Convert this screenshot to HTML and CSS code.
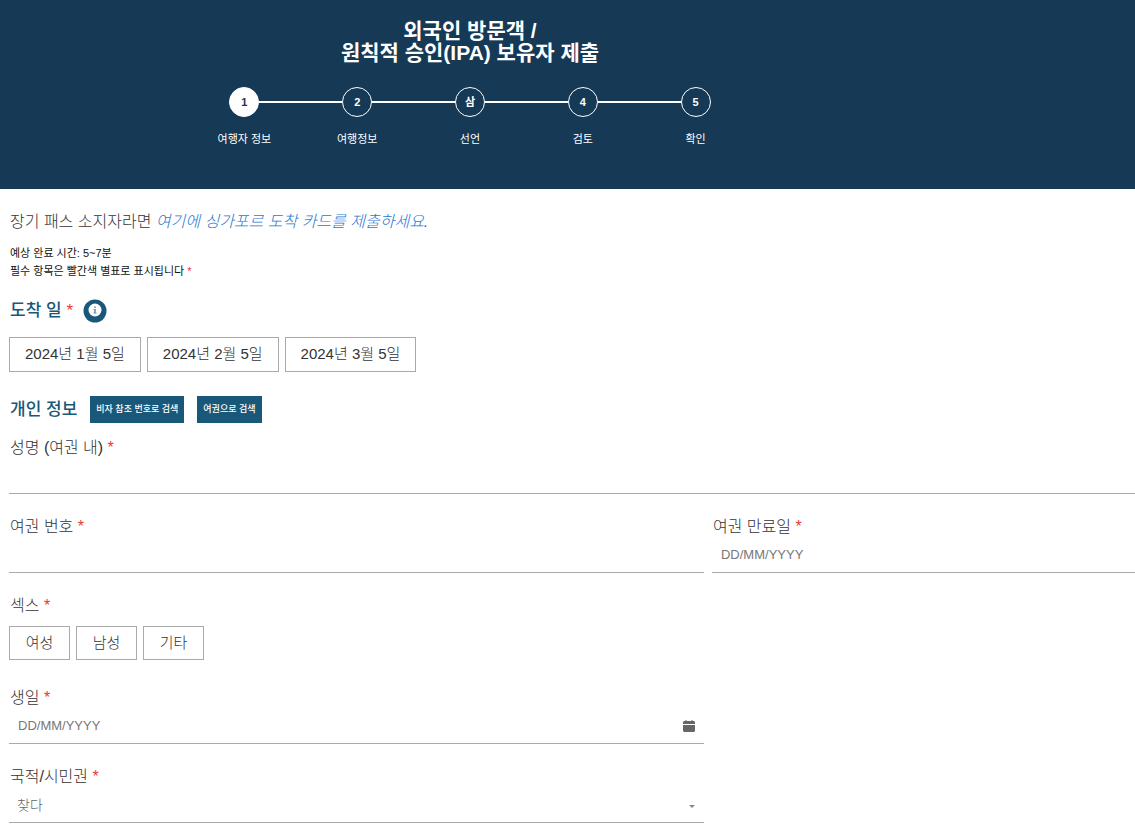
FILE: index.html
```html
<!DOCTYPE html>
<html lang="ko">
    <head>
        <meta charset="utf-8">
        <meta name="viewport" content="width=device-width, initial-scale=1.0">
        <title>외국인 방문객</title>
        <link rel="stylesheet" href="styles.css">
    </head>
    <body>
        <header class="banner">
            <div class="banner-inner">
                <h1>외국인 방문객 /<br>원칙적 승인(IPA) 보유자 제출</h1>
                <ol class="steps">
                    <li class="active"><div class="marker"><span>1</span></div>여행자 정보</li>
                    <li><div class="marker"><span>2</span></div>여행정보</li>
                    <li><div class="marker"><span>삼</span></div>선언</li>
                    <li><div class="marker"><span>4</span></div>검토</li>
                    <li><div class="marker"><span>5</span></div>확인</li>
                </ol>
            </div>
        </header>

        <main>
            <p class="intro">장기 패스 소지자라면 <a href="#">여기에 싱가포르 도착 카드를 제출하세요.</a></p>
            <p class="note">예상 완료 시간: 5~7분<br>필수 항목은 빨간색 별표로 표시됩니다 <span class="req">*</span></p>

            <div class="heading arrival">
                <h2>도착 일 <span class="req">*</span></h2>
                <button type="button" class="info" aria-label="도착 일">
                    <svg width="24" height="24" viewBox="0 0 24 24">
                        <circle cx="12" cy="12" r="11.5" fill="#195878"/>
                        <circle cx="12" cy="11" r="6.500" fill="#fff"/>
                        <path d="M11.200 7.500h1.600v1.600h-1.600zM10.500 10h2.300v3.500h.7v1h-3v-1h.7V11h-.7z" fill="#7193a6"/>
                    </svg>
                </button>
            </div>
            <div class="choices dates">
                <button type="button">2024년 1월 5일</button>
                <button type="button">2024년 2월 5일</button>
                <button type="button">2024년 3월 5일</button>
            </div>

            <form>
                <div class="heading personal">
                    <h2>개인 정보</h2>
                    <button type="button" class="retrieve">비자 참조 번호로 검색</button>
                    <button type="button" class="retrieve">여권으로 검색</button>
                </div>

                <div class="field wide">
                    <label for="name">성명 (여권 내) <span class="req">*</span></label>
                    <input type="text" id="name">
                </div>
                <div class="field">
                    <label for="passport">여권 번호 <span class="req">*</span></label>
                    <input type="text" id="passport">
                </div>
                <div class="field">
                    <label for="expiry">여권 만료일 <span class="req">*</span></label>
                    <input type="text" id="expiry" placeholder="DD/MM/YYYY">
                </div>
                <div class="field wide" role="group" aria-labelledby="sexLabel">
                    <div class="label" id="sexLabel">섹스 <span class="req">*</span></div>
                    <div class="choices sex">
                        <button type="button">여성</button>
                        <button type="button">남성</button>
                        <button type="button">기타</button>
                    </div>
                </div>
                <div class="field first">
                    <label for="birth">생일 <span class="req">*</span></label>
                    <div class="control">
                        <input type="text" id="birth" placeholder="DD/MM/YYYY">
                        <svg class="calendar" width="12" height="13" viewBox="0 0 12 13" fill="#666">
                            <path d="M2 1l1-1 1 1h4l1-1 1 1h1l1 1v2H0V2l1-1zM0 5h12v6l-1 1H1l-1-1z"/>
                        </svg>
                    </div>
                </div>
                <div class="field first">
                    <label for="nation">국적/시민권 <span class="req">*</span></label>
                    <div class="control">
                        <select id="nation">
                            <option>찾다</option>
                        </select>
                        <svg class="arrow" width="6" height="6" viewBox="0 0 6 6" fill="#888">
                            <path d="M0 3h6L3 6z"/>
                        </svg>
                    </div>
                </div>
            </form>
        </main>
    </body>
</html>
```

FILE: styles.css
```css
* {
    padding: 0;
    margin: 0;
    box-sizing: border-box;
}

body {
    font-family: "Liberation Sans", "Noto Sans CJK KR", sans-serif;
    font-size: 16px;
    font-weight: 300;
    line-height: 20px;
    color: #333;
    background: #fff;
}

button, input, select {
    font-family: inherit;
    font-weight: inherit;
    color: inherit;
    border-radius: 0;
}

button {
    cursor: pointer;
}

.banner {
    background: #163955;
    color: #fff;
    padding: 20px 0 41px;
}

.banner-inner {
    max-width: 940px;
}

h1 {
    font-size: 21px;
    line-height: 22px;
    text-align: center;
}

/* progress steps */
.steps {
    display: flex;
    width: 60%;
    margin: 23px auto 0;
    list-style: none;
}

.steps li {
    flex: 1;
    font-size: 11px;
    font-weight: 400;
    line-height: 18px;
    text-align: center;
}

.marker {
    display: flex;
    align-items: center;
    margin-bottom: 13px;
}

.marker::before, .marker::after {
    content: "";
    flex: 1;
    height: 2px;
    background: #fff;
}

.steps li:first-child .marker::before,
.steps li:last-child .marker::after {
    background: none;
}

.marker span {
    width: 30px;
    height: 30px;
    border: 1px solid #fff;
    border-radius: 50%;
    font-weight: 700;
    line-height: 28px;
}

.active .marker span {
    background: #fff;
    color: #163955;
}

main {
    padding: 23px 0 5px 9px;
}

.intro, .note, h2, label, .label {
    padding-left: 1px;
}

.intro a {
    color: #1f78d1;
    font-style: italic;
    text-decoration: none;
}

.note {
    margin-top: 12px;
    font-size: 11px;
    font-weight: 400;
    line-height: 18px;
    color: #111;
}

.req {
    color: #e53935;
    font-weight: 400;
}

.heading {
    display: flex;
    align-items: center;
}

h2 {
    font-size: 17px;
    font-weight: 500;
    color: #195878;
}

.arrival {
    gap: 10px;
    margin-top: 19px;
}

.info {
    display: flex;
    border: none;
    background: none;
}

.choices {
    display: flex;
    gap: 6px;
}

.choices button {
    height: 35px;
    padding: 0 15px 4px;
    border: 1px solid #aaa;
    background: #fff;
    font-size: 15px;
}

.dates {
    margin-top: 14px;
}

form {
    display: grid;
    grid-template-columns: 23fr 14fr;
    column-gap: 8px;
    row-gap: 23px;
    margin-top: 24px;
}

.personal {
    grid-column: 1 / -1;
    gap: 13px;
    margin-bottom: -8px;
}

.retrieve {
    height: 27px;
    padding: 0 6px 2px;
    border: none;
    background: #195878;
    color: #fff;
    font-size: 9px;
    font-weight: 500;
}

.wide {
    grid-column: 1 / -1;
}

.first {
    grid-column: 1;
}

.field label, .label {
    display: block;
}

.field input, .field select {
    display: block;
    width: 100%;
    height: 36px;
    padding: 0 9px;
    border: none;
    border-bottom: 1px solid #aaa;
    background: none;
    font-size: 13px;
    outline: none;
}

.field input::placeholder {
    color: #777;
}

.field select {
    appearance: none;
    padding: 0 8px;
    color: #666;
    font-size: 14px;
}

.sex {
    margin: 10px 0 5px;
}

.choices.sex button {
    min-width: 61px;
    height: 34px;
}

.control {
    display: grid;
    align-items: center;
}

.control > * {
    grid-area: 1 / 1;
}

.control svg {
    justify-self: end;
    margin-right: 9px;
    pointer-events: none;
}
```
